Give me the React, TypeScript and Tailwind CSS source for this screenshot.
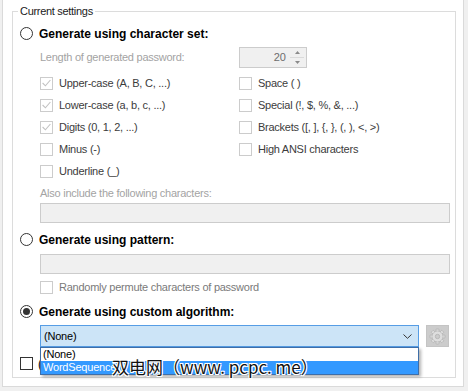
import React from "react";

const sans = "font-['Liberation_Sans',Arial,sans-serif]";

function CheckBox({ checked = false, disabled = true }: { checked?: boolean; disabled?: boolean }) {
  return (
    <span
      className={`w-[13px] h-[13px] shrink-0 border bg-white flex items-center justify-center ${
        disabled ? "border-[#cccccc]" : "border-[#333333]"
      }`}
    >
      {checked && (
        <svg width="9" height="8" viewBox="0 0 9 8">
          <path d="M0.6 4 L3.4 6.8 L8.4 1" stroke="#c2c2c2" strokeWidth="1.1" fill="none" />
        </svg>
      )}
    </span>
  );
}

function Radio({ checked = false }: { checked?: boolean }) {
  return (
    <span className="w-[13px] h-[13px] shrink-0 rounded-full border border-[#333333] bg-white flex items-center justify-center">
      {checked && <span className="w-[7px] h-[7px] rounded-full bg-[#333333]" />}
    </span>
  );
}

function CheckRow({ label, checked }: { label: string; checked?: boolean }) {
  return (
    <div className="h-[22px] flex items-center gap-[6px]">
      <CheckBox checked={checked} />
      <span className="text-[11px] tracking-[-0.25px] text-[#3c3c3c] whitespace-nowrap">{label}</span>
    </div>
  );
}

function RadioRow({ label, checked }: { label: string; checked?: boolean }) {
  return (
    <div className="h-[15px] flex items-center gap-[6px]">
      <Radio checked={checked} />
      <span className="text-[12px] font-bold text-black whitespace-nowrap">{label}</span>
    </div>
  );
}

function Gear() {
  const teeth = [0, 45, 90, 135, 180, 225, 270, 315];
  return (
    <svg width="17" height="17" viewBox="0 0 17 17">
      <g fill="#dedede" stroke="#b3b3b3" strokeWidth="0.8">
        {teeth.map((a) => (
          <rect key={a} x="7" y="1" width="3" height="4" rx="0.6" transform={`rotate(${a} 8.5 8.5)`} />
        ))}
        <circle cx="8.5" cy="8.5" r="5.3" />
      </g>
      <circle cx="8.5" cy="8.5" r="5" fill="#dedede" />
      <circle cx="8.5" cy="8.5" r="2.2" fill="#cccccc" stroke="#b3b3b3" strokeWidth="0.8" />
    </svg>
  );
}

export default function App() {
  return (
    <div className={`w-[468px] h-[391px] bg-[#f0f0f0] pl-[2px] ${sans}`}>
      <div className="w-[462px] h-[387px] bg-white border-l border-r border-b border-[#dadada] pl-[9px] pt-[5px] relative">
        <fieldset className="w-[444px] h-[373px] border border-[#dcdcdc] pl-[7px]">
          <legend className="px-[2px] -ml-[2px] text-[11px] tracking-[-0.3px] leading-[13px] text-[#1a1a1a]">
            Current settings
          </legend>

          <div className="mt-[8px]">
            <RadioRow label="Generate using character set:" />
          </div>

          <div className="pl-[20px]">
            <div className="mt-[6px] h-[21px] flex items-center">
              <span className="w-[199px] text-[11px] tracking-[-0.25px] text-[#a3a3a3] whitespace-nowrap">
                Length of generated password:
              </span>
              <div className="w-[68px] h-[21px] border border-[#cccccc] bg-[#f0f0f0] flex items-center">
                <span className="flex-1 text-right pr-[4px] text-[11px] text-[#6d6d6d]">20</span>
                <div className="w-[14px] h-[19px] mr-[2px] flex flex-col">
                  <div className="flex-1 flex items-center justify-center border-b border-[#dadada]">
                    <svg width="5" height="3" viewBox="0 0 5 3">
                      <path d="M0 3 L2.5 0 L5 3 Z" fill="#8a8a8a" />
                    </svg>
                  </div>
                  <div className="flex-1 flex items-center justify-center">
                    <svg width="5" height="3" viewBox="0 0 5 3">
                      <path d="M0 0 L2.5 3 L5 0 Z" fill="#8a8a8a" />
                    </svg>
                  </div>
                </div>
              </div>
            </div>

            <div className="mt-[4px] grid grid-cols-[199px_1fr]">
              <div>
                <CheckRow label="Upper-case (A, B, C, ...)" checked />
                <CheckRow label="Lower-case (a, b, c, ...)" checked />
                <CheckRow label="Digits (0, 1, 2, ...)" checked />
                <CheckRow label="Minus (-)" />
                <CheckRow label="Underline (_)" />
              </div>
              <div>
                <CheckRow label="Space ( )" />
                <CheckRow label="Special (!, $, %, &, ...)" />
                <CheckRow label="Brackets ([, ], {, }, (, ), <, >)" />
                <CheckRow label="High ANSI characters" />
              </div>
            </div>

            <div className="mt-[4px] h-[14px] flex items-center text-[11px] tracking-[-0.25px] text-[#a3a3a3]">
              Also include the following characters:
            </div>
            <div className="mt-[3px] w-[410px] h-[20px] border border-[#cccccc] bg-[#f0f0f0]" />
          </div>

          <div className="mt-[9px]">
            <RadioRow label="Generate using pattern:" />
          </div>

          <div className="pl-[20px]">
            <div className="mt-[7px] w-[410px] h-[20px] border border-[#cccccc] bg-[#f0f0f0]" />
            <div className="mt-[6px] h-[14px] flex items-center gap-[6px]">
              <CheckBox />
              <span className="text-[11px] tracking-[-0.25px] text-[#7a7a7a] whitespace-nowrap">
                Randomly permute characters of password
              </span>
            </div>
          </div>

          <div className="mt-[10px]">
            <RadioRow label="Generate using custom algorithm:" checked />
          </div>

          <div className="pl-[20px] mt-[6px] flex items-center gap-[7px]">
            <div className="relative w-[379px] h-[22px] border border-[#569de5] bg-[#cce4f7] flex items-center pl-[3px] pr-[6px]">
              <span className="flex-1 text-[11px] tracking-[-0.2px] text-black">(None)</span>
              <svg width="9" height="5" viewBox="0 0 9 5">
                <path d="M0.5 0.5 L4.5 4.3 L8.5 0.5" stroke="#333333" strokeWidth="1" fill="none" />
              </svg>

              {/* open dropdown list */}
              <div className="absolute left-[-1px] top-[21px] z-10 w-[379px] h-[28px] border border-[#3e6ea8] bg-white shadow-[2px_2px_3px_rgba(0,0,0,0.3)] flex flex-col">
                <div className="h-[13px] flex items-center pl-[2px] text-[11px] tracking-[-0.2px] text-black leading-none">
                  (None)
                </div>
                <div className="h-[13px] flex items-center pl-[2px] bg-[#3399ff] text-[11px] tracking-[-0.2px] text-white leading-none">
                  WordSequence
                </div>
              </div>
            </div>
            <div className="w-[23px] h-[22px] bg-[#cccccc] border border-[#c4c4c4] flex items-center justify-center">
              <Gear />
            </div>
          </div>

          <div className="mt-[10px] h-[13px] flex items-center gap-[5px]">
            <CheckBox disabled={false} />
            <span className="text-[12px] text-black">(</span>
          </div>
        </fieldset>

        <div className="absolute left-[109px] top-[356px] z-20 text-[17px] leading-[22px] font-['Noto_Sans_CJK_SC',sans-serif] text-[#111111] whitespace-nowrap [text-shadow:1px_1px_0_#fff,-1px_-1px_0_#fff,1px_-1px_0_#fff,-1px_1px_0_#fff,0_1px_0_#fff,0_-1px_0_#fff]">
          双电网（www. pcpc. me）
        </div>
      </div>
    </div>
  );
}
